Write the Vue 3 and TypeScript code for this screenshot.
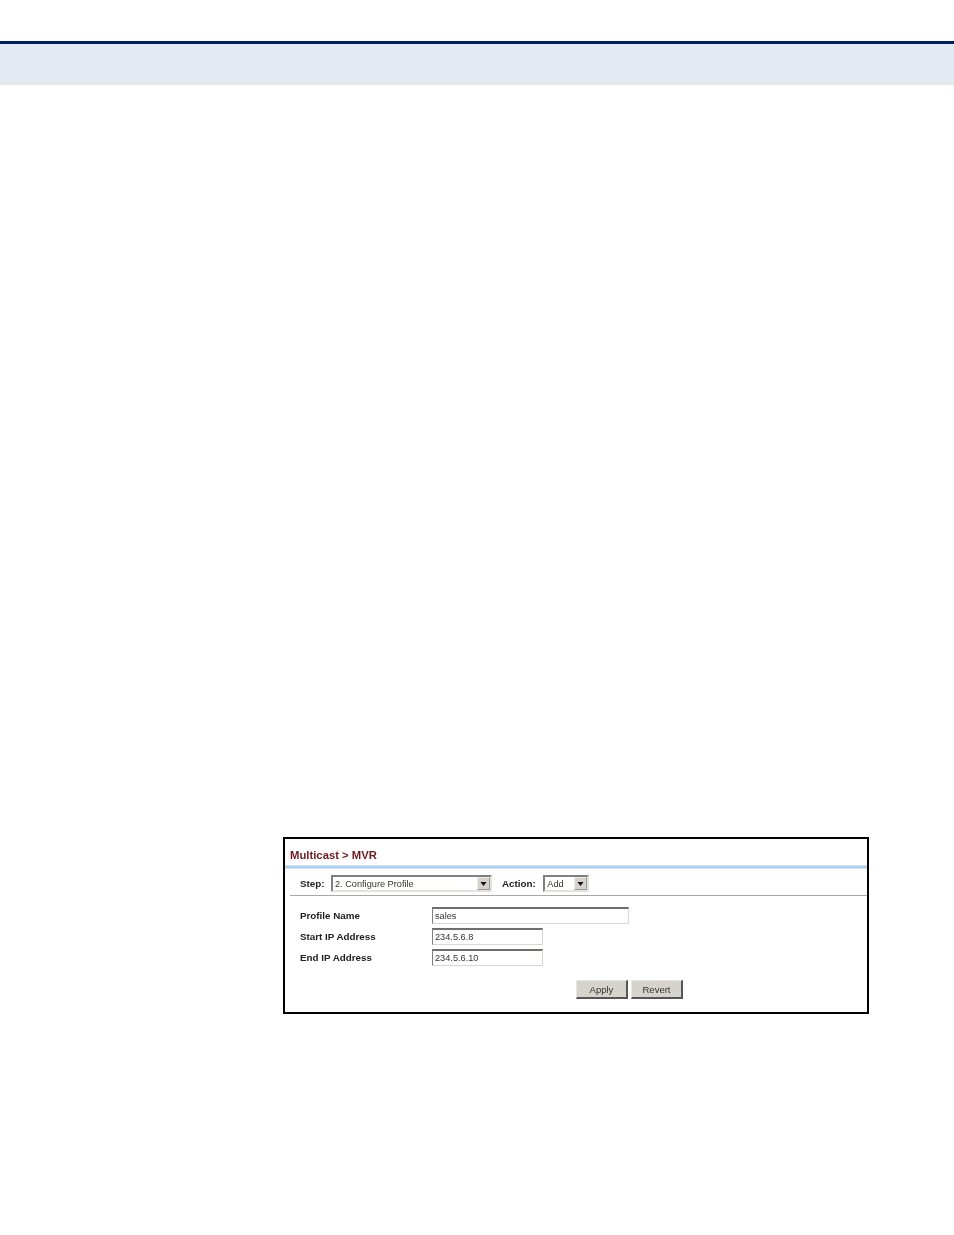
<script setup lang="ts">
interface Field {
  label: string
  value: string
  wide: boolean
}

const fields: Field[] = [
  { label: 'Profile Name', value: 'sales', wide: true },
  { label: 'Start IP Address', value: '234.5.6.8', wide: false },
  { label: 'End IP Address', value: '234.5.6.10', wide: false },
]
</script>

<template>
  <div class="page">
    <header class="band"></header>
    <section class="figure">
      <h1 class="title">Multicast &gt; MVR</h1>
      <div class="rule"></div>
      <div class="toolbar">
        <span class="label">Step:</span>
        <div class="select step">
          <span class="select-text">2. Configure Profile</span>
          <span class="arrow"><svg width="7" height="4" viewBox="0 0 7 4"><path d="M0.5 0h6L3.5 4z" fill="#111" /></svg></span>
        </div>
        <span class="label action">Action:</span>
        <div class="select add">
          <span class="select-text">Add</span>
          <span class="arrow"><svg width="7" height="4" viewBox="0 0 7 4"><path d="M0.5 0h6L3.5 4z" fill="#111" /></svg></span>
        </div>
      </div>
      <div class="form">
        <div v-for="f in fields" :key="f.label" class="row">
          <span class="label name">{{ f.label }}</span>
          <div class="input" :class="{ wide: f.wide }">{{ f.value }}</div>
        </div>
      </div>
      <div class="buttons">
        <div class="btn">Apply</div>
        <div class="btn">Revert</div>
      </div>
    </section>
  </div>
</template>

<style>
html, body {
  margin: 0;
  background: #fff;
}
</style>

<style scoped>
.page {
  width: 954px;
  height: 1235px;
  padding-top: 41px;
  box-sizing: border-box;
  background: #fff;
  font-family: "Liberation Sans", Arial, sans-serif;
  overflow: hidden;
}
.band {
  height: 44px;
  box-sizing: border-box;
  border-top: 3px solid #002060;
  background: #e4e8f0;
}
.figure {
  width: 586px;
  height: 177px;
  margin: 752px 0 0 283px;
  box-sizing: border-box;
  border: 2px solid #000;
  background: #fff;
  filter: blur(0.3px);
}
.title {
  margin: 0;
  padding: 9px 0 0 5px;
  height: 26px;
  box-sizing: border-box;
  font-size: 11.3px;
  line-height: 14px;
  font-weight: bold;
  color: #701a20;
}
.rule {
  height: 4px;
  background: linear-gradient(#d5e8f8, #9fcdf0 60%, #e3f0fa);
}
.toolbar {
  display: flex;
  align-items: center;
  height: 27px;
  margin-left: 5px;
  padding: 3px 0 0 10px;
  border-bottom: 1px solid #a8a8a8;
  box-sizing: border-box;
}
.label {
  font-size: 9.8px;
  font-weight: bold;
  color: #222;
  white-space: nowrap;
}
.select {
  display: flex;
  align-items: center;
  justify-content: space-between;
  height: 17px;
  box-sizing: border-box;
  border: 2px solid;
  border-color: #808080 #e4e2dc #e4e2dc #808080;
  background: #fff;
}
.step {
  width: 161px;
  margin-left: 6.5px;
}
.add {
  width: 46px;
  margin-left: 7.5px;
}
.action {
  margin-left: 10px;
}
.select-text {
  padding-left: 2px;
  font-size: 9.2px;
  color: #333;
  white-space: nowrap;
}
.arrow {
  display: flex;
  align-items: center;
  justify-content: center;
  width: 13px;
  height: 13px;
  box-sizing: border-box;
  background: #d6d3cc;
  border: 1px solid;
  border-color: #eeede8 #999 #999 #eeede8;
}
.form {
  display: flex;
  flex-direction: column;
  gap: 4px;
  padding: 11px 0 0 15px;
}
.row {
  display: flex;
  align-items: center;
}
.name {
  width: 132px;
  flex: none;
}
.input {
  width: 111px;
  height: 17px;
  box-sizing: border-box;
  border: 1px solid #d8d6cf;
  border-top: 2px solid #6e6e6e;
  border-left: 1px solid #808080;
  padding-left: 2px;
  font-size: 9.2px;
  line-height: 14px;
  color: #333;
  background: #fff;
}
.input.wide {
  width: 197px;
}
.buttons {
  display: flex;
  gap: 3px;
  margin: 14px 0 0 291px;
}
.btn {
  width: 52px;
  height: 19px;
  box-sizing: border-box;
  display: flex;
  align-items: center;
  justify-content: center;
  font-size: 9.5px;
  color: #333;
  background: #d6d3cc;
  border-style: solid;
  border-color: #e8e6e0 #555 #555 #e8e6e0;
  border-width: 1px 2px 2px 1px;
}
</style>
